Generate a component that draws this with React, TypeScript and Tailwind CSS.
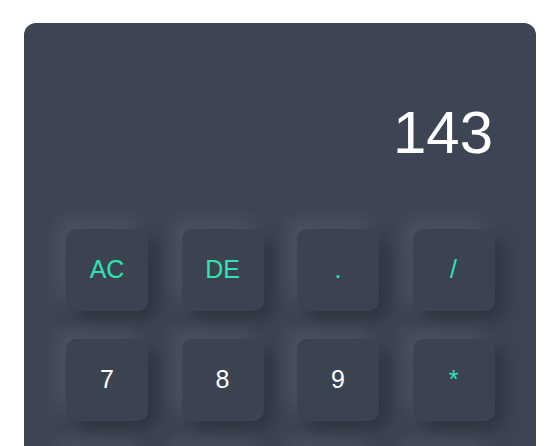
const keys: { label: string; accent?: boolean }[] = [
  { label: 'AC', accent: true },
  { label: 'DE', accent: true },
  { label: '.', accent: true },
  { label: '/', accent: true },
  { label: '7' },
  { label: '8' },
  { label: '9' },
  { label: '*', accent: true },
  { label: '4' },
  { label: '5' },
  { label: '6' },
  { label: '-', accent: true },
];

export default function App() {
  return (
    <div className="min-h-screen bg-white pt-[23px] pl-[24px] font-['Liberation_Sans',Arial,sans-serif]">
      <div className="w-[512px] h-[520px] rounded-[12px] bg-[#3d4554] px-[42px]">
        {/* Display */}
        <div className="h-[206px] flex items-start justify-end pt-[80px] pr-[1px]">
          <span className="text-[60px] leading-[60px] text-white">143</span>
        </div>

        {/* Keys */}
        <div className="grid grid-cols-4 gap-x-[34px] gap-y-[28px]">
          {keys.map((k) => (
            <button
              key={k.label}
              className={
                'w-[82px] h-[82px] rounded-[10px] bg-[#3b4351] text-[25px] flex items-center justify-center shadow-[-8px_-8px_20px_rgba(255,255,255,0.09),8px_8px_20px_rgba(0,0,0,0.3)] ' +
                (k.accent ? 'text-[#2fe3b4]' : 'text-white')
              }
            >
              {k.label}
            </button>
          ))}
        </div>
      </div>
    </div>
  );
}
